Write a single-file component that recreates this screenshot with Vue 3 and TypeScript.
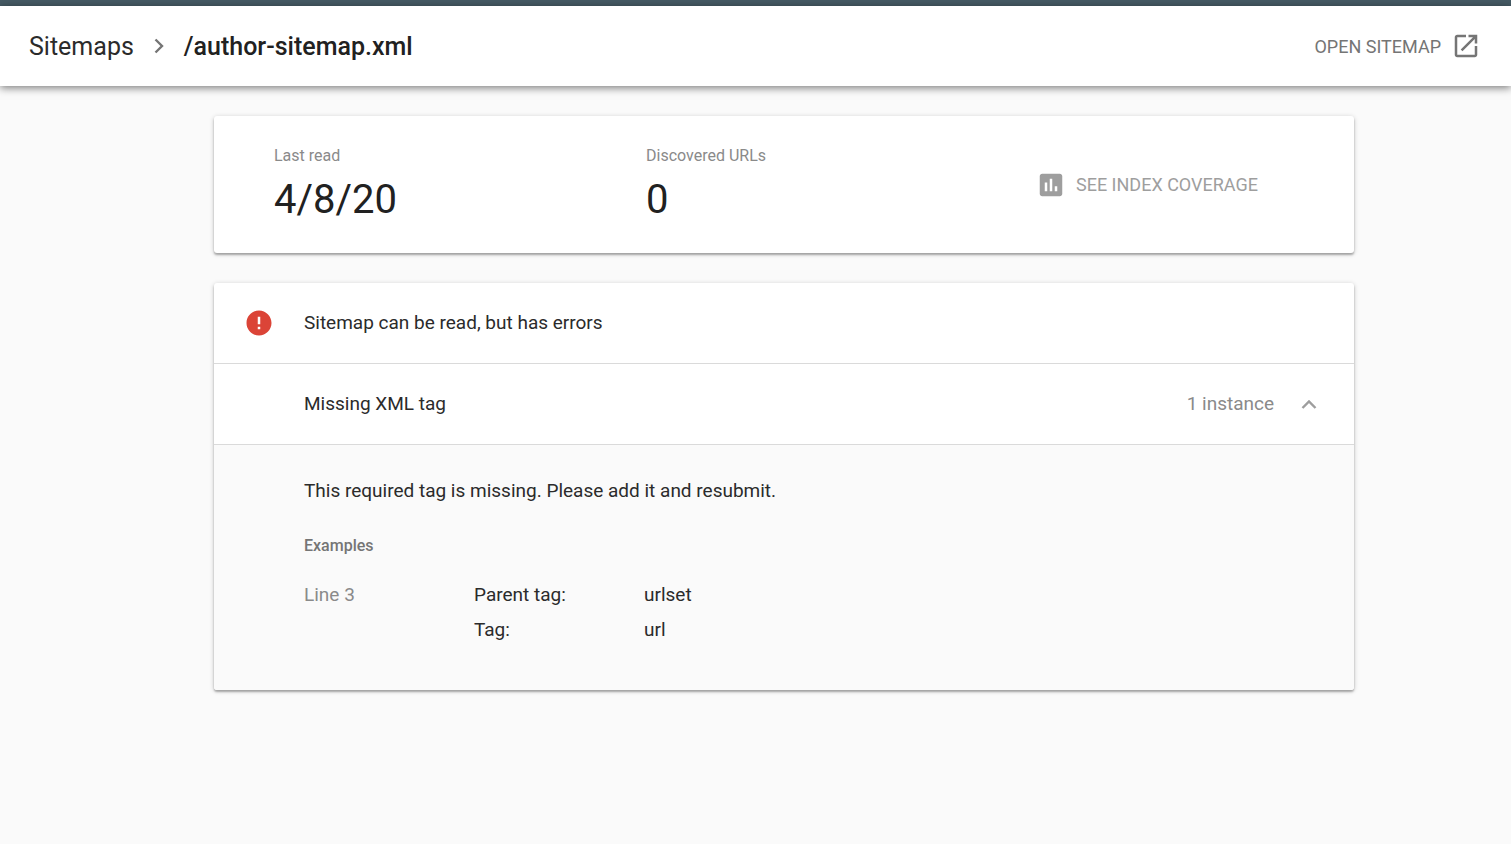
<script setup lang="ts">
import { ref } from 'vue'

interface Metric {
  label: string
  value: string
}

interface Field {
  name: string
  value: string
}

const metrics: Metric[] = [
  { label: 'Last read', value: '4/8/20' },
  { label: 'Discovered URLs', value: '0' },
]

const fields: Field[] = [
  { name: 'Parent tag:', value: 'urlset' },
  { name: 'Tag:', value: 'url' },
]

const expanded = ref(true)
</script>

<template>
  <div class="page">
    <header class="topbar">
      <nav class="crumbs" aria-label="Breadcrumb">
        <a href="#sitemaps">Sitemaps</a>
        <svg class="crumb-arrow" viewBox="0 0 30 30" aria-hidden="true">
          <path d="M11.5 8.5l6.5 6.5-6.5 6.5" fill="none" stroke="currentColor" stroke-width="2.4" />
        </svg>
        <h1>/author-sitemap.xml</h1>
      </nav>
      <a class="open" href="#open">
        <span>OPEN SITEMAP</span>
        <svg class="icon" viewBox="0 0 24 24" aria-hidden="true">
          <path
            fill="currentColor"
            d="M19 19H5V5h7V3H5c-1.11 0-2 .9-2 2v14c0 1.1.89 2 2 2h14c1.1 0 2-.9 2-2v-7h-2v7zM14 3v2h3.59l-9.83 9.83 1.41 1.41L19 6.41V10h2V3h-7z"
          />
        </svg>
      </a>
    </header>

    <main class="content">
      <section class="card summary">
        <dl v-for="metric in metrics" :key="metric.label" class="metric">
          <dt>{{ metric.label }}</dt>
          <dd>{{ metric.value }}</dd>
        </dl>
        <button class="coverage" type="button" disabled>
          <svg class="icon" viewBox="0 0 24 24" aria-hidden="true">
            <path
              fill="currentColor"
              d="M19 3H5c-1.1 0-2 .9-2 2v14c0 1.1.9 2 2 2h14c1.1 0 2-.9 2-2V5c0-1.1-.9-2-2-2zM9 17H7v-7h2v7zm4 0h-2V7h2v10zm4 0h-2v-4h2v4z"
            />
          </svg>
          <span>SEE INDEX COVERAGE</span>
        </button>
      </section>

      <section class="card">
        <div class="row status">
          <svg class="icon error" viewBox="0 0 24 24" aria-hidden="true">
            <path
              fill="currentColor"
              d="M12 2C6.48 2 2 6.48 2 12s4.48 10 10 10 10-4.48 10-10S17.52 2 12 2zm1 15h-2v-2h2v2zm0-4h-2V7h2v6z"
            />
          </svg>
          <h2>Sitemap can be read, but has errors</h2>
        </div>
        <button
          class="row issue"
          type="button"
          :aria-expanded="expanded"
          aria-controls="issue-details"
          @click="expanded = !expanded"
        >
          <span class="issue-name">Missing XML tag</span>
          <span class="count">1 instance</span>
          <svg class="chevron" :class="{ closed: !expanded }" viewBox="0 0 30 30" aria-hidden="true">
            <path d="M8.5 19l6.5-6.5 6.5 6.5" fill="none" stroke="currentColor" stroke-width="2.4" />
          </svg>
        </button>
        <div v-show="expanded" id="issue-details" class="details">
          <p>This required tag is missing. Please add it and resubmit.</p>
          <h3>Examples</h3>
          <table>
            <tbody>
              <tr v-for="(field, index) in fields" :key="field.name">
                <td class="line">{{ index === 0 ? 'Line 3' : '' }}</td>
                <th scope="row">{{ field.name }}</th>
                <td>{{ field.value }}</td>
              </tr>
            </tbody>
          </table>
        </div>
      </section>
    </main>
  </div>
</template>

<style>
body {
  margin: 0;
  background: #fafafa;
}
</style>

<style scoped>
.page {
  min-height: 100vh;
  box-sizing: border-box;
  border-top: 6px solid #455a64;
  background: #fafafa;
  color: #2b2b2b;
  font-family: Roboto, "Liberation Sans", sans-serif;
  font-size: 19px;
  line-height: 24px;
}

h1,
h2,
h3,
p,
dl,
dd {
  margin: 0;
  font-size: inherit;
  font-weight: 400;
}

a {
  color: inherit;
  text-decoration: none;
}

button {
  border: 0;
  background: none;
  font: inherit;
  color: inherit;
}

.icon {
  width: 30px;
  height: 30px;
  flex: none;
}

.topbar {
  display: flex;
  align-items: center;
  justify-content: space-between;
  height: 80px;
  padding: 0 30px 0 29px;
  background: #fff;
  box-shadow: 0 2px 8px rgba(0, 0, 0, 0.5);
}

.crumbs {
  display: flex;
  align-items: center;
  gap: 10px;
  font-size: 25px;
  line-height: 32px;
}

.crumbs a,
.crumbs h1,
.open span {
  padding-top: 2px;
}

.crumbs h1 {
  color: #212121;
  font-weight: 500;
}

.crumb-arrow {
  width: 30px;
  height: 30px;
  color: #757575;
}

.open {
  display: flex;
  align-items: center;
  gap: 10px;
  color: #757575;
  font-size: 18px;
}

.content {
  display: flex;
  flex-direction: column;
  gap: 30px;
  max-width: 1140px;
  margin: 0 auto;
  padding: 30px 0 30px 57px;
}

.card {
  overflow: hidden;
  border-radius: 3px;
  background: #fff;
  box-shadow: 0 1px 5px rgba(0, 0, 0, 0.2), 0 2px 2px rgba(0, 0, 0, 0.26);
}

.summary {
  display: grid;
  grid-template-columns: 1fr 1fr 336px;
  align-items: center;
  padding: 28px 0 29px 60px;
}

.metric dt {
  color: #8a8a8a;
  font-size: 16px;
}

.metric dd {
  margin-top: 8px;
  color: #212121;
  font-size: 40px;
  line-height: 48px;
}

.coverage {
  display: flex;
  align-items: center;
  gap: 10px;
  padding: 2px 18px 0;
  color: #9e9e9e;
  font-size: 18px;
}

.row {
  display: flex;
  align-items: center;
  box-sizing: border-box;
  width: 100%;
  height: 81px;
  padding: 0 30px;
  border-bottom: 1px solid #dadada;
  text-align: left;
}

.status {
  gap: 30px;
}

.error {
  color: #db4437;
}

.issue {
  cursor: pointer;
}

.issue-name {
  flex: 1;
  padding-left: 60px;
}

.count {
  color: #8a8a8a;
}

.chevron {
  width: 30px;
  height: 30px;
  margin-left: 20px;
  color: #9e9e9e;
}

.closed {
  transform: rotate(180deg);
}

.details {
  padding: 34px 90px 43px;
  background: #fafafa;
}

.details h3 {
  margin: 31px 0 19px;
  color: #757575;
  font-size: 16px;
  font-weight: 500;
}

table {
  border-collapse: collapse;
}

th,
td {
  height: 35px;
  padding: 0;
  font-weight: 400;
  text-align: left;
}

.line,
th {
  width: 170px;
}

.line {
  color: #8a8a8a;
}
</style>
